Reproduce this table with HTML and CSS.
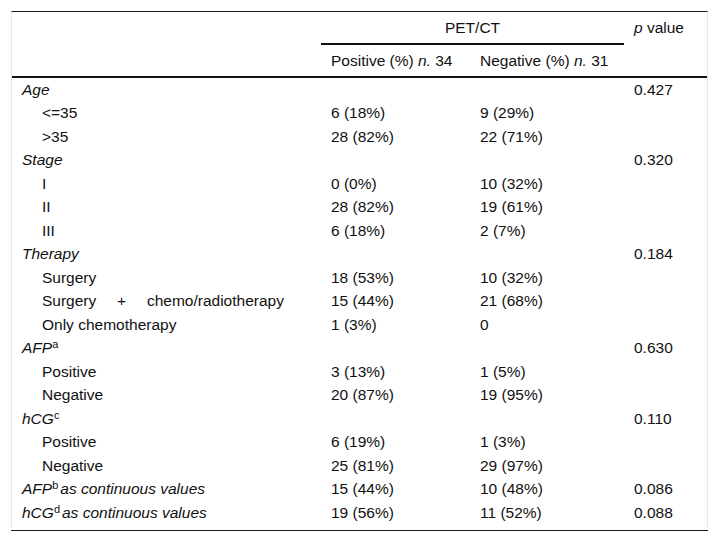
FILE: index.html
```html
<!DOCTYPE html>
<html>
<head>
<meta charset="utf-8">
<link rel="stylesheet" href="styles.css">
</head>
<body>
<div class="wrap">
<table class="tbl">
<colgroup>
<col class="c1"><col class="c2"><col class="c3"><col class="c4">
</colgroup>
<thead>
<tr>
<th rowspan="2" class="hd hd-bottom"></th>
<th colspan="2" class="hd center group">PET/CT</th>
<th rowspan="2" class="hd hd-bottom"><i>p</i> value</th>
</tr>
<tr>
<th class="hd hd-bottom">Positive (%) <i>n.</i> 34</th>
<th class="hd hd-bottom">Negative (%) <i>n.</i> 31</th>
</tr>
</thead>
<tbody>
<tr><td><i>Age</i></td><td></td><td></td><td>0.427</td></tr>
<tr><td class="ind">&lt;=35</td><td>6 (18%)</td><td>9 (29%)</td><td></td></tr>
<tr><td class="ind">&gt;35</td><td>28 (82%)</td><td>22 (71%)</td><td></td></tr>
<tr><td><i>Stage</i></td><td></td><td></td><td>0.320</td></tr>
<tr><td class="ind">I</td><td>0 (0%)</td><td>10 (32%)</td><td></td></tr>
<tr><td class="ind">II</td><td>28 (82%)</td><td>19 (61%)</td><td></td></tr>
<tr><td class="ind">III</td><td>6 (18%)</td><td>2 (7%)</td><td></td></tr>
<tr><td><i>Therapy</i></td><td></td><td></td><td>0.184</td></tr>
<tr><td class="ind">Surgery</td><td>18 (53%)</td><td>10 (32%)</td><td></td></tr>
<tr><td class="ind"><span class="wide">Surgery + chemo/radiotherapy</span></td><td>15 (44%)</td><td>21 (68%)</td><td></td></tr>
<tr><td class="ind">Only chemotherapy</td><td>1 (3%)</td><td>0</td><td></td></tr>
<tr><td><i>AFP</i><sup>a</sup></td><td></td><td></td><td>0.630</td></tr>
<tr><td class="ind">Positive</td><td>3 (13%)</td><td>1 (5%)</td><td></td></tr>
<tr><td class="ind">Negative</td><td>20 (87%)</td><td>19 (95%)</td><td></td></tr>
<tr><td><i>hCG</i><sup>c</sup></td><td></td><td></td><td>0.110</td></tr>
<tr><td class="ind">Positive</td><td>6 (19%)</td><td>1 (3%)</td><td></td></tr>
<tr><td class="ind">Negative</td><td>25 (81%)</td><td>29 (97%)</td><td></td></tr>
<tr><td><i>AFP</i><sup class="gap">b</sup><i>as continuous values</i></td><td>15 (44%)</td><td>10 (48%)</td><td>0.086</td></tr>
<tr><td><i>hCG</i><sup class="gap">d</sup><i>as continuous values</i></td><td>19 (56%)</td><td>11 (52%)</td><td>0.088</td></tr>
</tbody>
</table>
</div>
<div class="foot"></div>
</body>
</html>
```

FILE: styles.css
```css
html, body {
  margin: 0;
  padding: 0;
  background: #fff;
}
body {
  font-family: "Liberation Sans", Arial, sans-serif;
  font-size: 15.5px;
  color: #111;
}
.wrap {
  margin: 11px 11px 0 11px;
  border-top: 1px solid #1a1a1a;
  border-left: 1px solid #e6e6e6;
  border-right: 1px solid #e6e6e6;
  padding-bottom: 2.5px;
}
.tbl {
  width: 100%;
  table-layout: fixed;
  border-collapse: separate;
  border-spacing: 0;
}
.c1 { width: 309px; }
.c2 { width: 149px; }
.c3 { width: 154px; }
.c4 { width: 83px; }
th, td {
  text-align: left;
  font-weight: normal;
  vertical-align: top;
  line-height: 18px;
  padding: 2.75px 10px;
  white-space: nowrap;
}
.hd {
  padding-top: 6.5px;
  padding-bottom: 6.5px;
}
.center { text-align: center; }
.group { border-bottom: 2px solid #111; }
.hd-bottom { border-bottom: 2px solid #111; }
.ind { padding-left: 30px; }
.wide { word-spacing: 16.5px; }
sup {
  font-size: 11px;
  line-height: 0;
  vertical-align: 5px;
  font-style: normal;
}
.gap { margin-right: 2px; }
.foot {
  margin: 3px 11px 0 11px;
  border-top: 1px solid #1a1a1a;
}
```
